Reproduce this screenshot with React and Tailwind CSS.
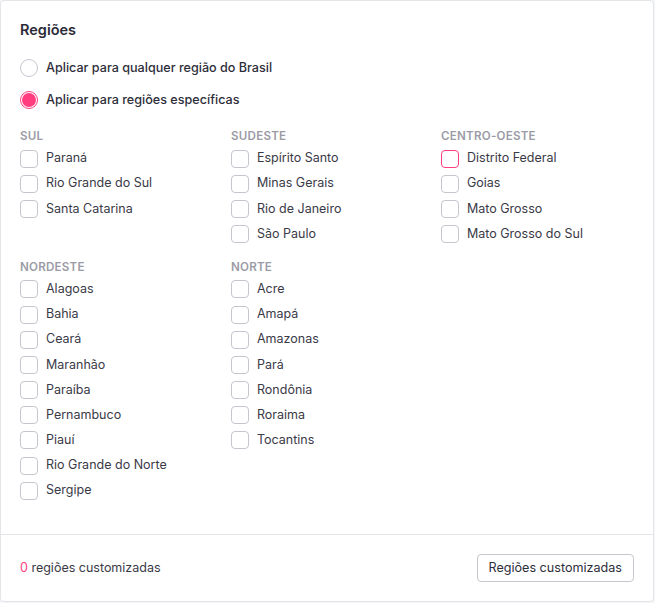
import React, { useState } from 'react';

const groups = [
  [
    { name: 'Sul', items: ['Paraná', 'Rio Grande do Sul', 'Santa Catarina'] },
    { name: 'Sudeste', items: ['Espírito Santo', 'Minas Gerais', 'Rio de Janeiro', 'São Paulo'] },
    { name: 'Centro-Oeste', items: ['Distrito Federal', 'Goias', 'Mato Grosso', 'Mato Grosso do Sul'] },
  ],
  [
    {
      name: 'Nordeste',
      items: ['Alagoas', 'Bahia', 'Ceará', 'Maranhão', 'Paraíba', 'Pernambuco', 'Piauí', 'Rio Grande do Norte', 'Sergipe'],
    },
    { name: 'Norte', items: ['Acre', 'Amapá', 'Amazonas', 'Pará', 'Rondônia', 'Roraima', 'Tocantins'] },
  ],
];

function Radio({ checked, label, onClick }) {
  return (
    <button onClick={onClick} className="flex h-[32px] items-center gap-[8px] text-left">
      {checked ? (
        <span className="flex h-[18px] w-[18px] items-center justify-center rounded-full border border-[#ff3d7f] bg-white">
          <span className="h-[14px] w-[14px] rounded-full bg-[#ff3d7f]" />
        </span>
      ) : (
        <span className="h-[18px] w-[18px] rounded-full border border-[#c6c6cf] bg-white" />
      )}
      <span className="text-[12.6px] font-medium text-[#2e2e3a]">{label}</span>
    </button>
  );
}

function Checkbox({ label, focused }) {
  return (
    <label className="flex h-[25.2px] items-center gap-[8px]">
      <span
        className={`h-[18px] w-[18px] rounded-[4px] border bg-white ${
          focused ? 'border-[#ff3d7f]' : 'border-[#c6c6cf]'
        }`}
      />
      <span className="text-[12.5px] text-[#3a3a47]">{label}</span>
    </label>
  );
}

export default function App() {
  const [mode, setMode] = useState('specific');

  return (
    <div className="min-h-screen bg-[#f4f5f7] font-['Inter',sans-serif]">
      <div className="flex h-[602px] w-[654px] flex-col rounded-[4px] border border-[#e3e5e9] bg-white">
        {/* Body */}
        <div className="flex-1 px-[19px] pt-[19px]">
          <h3 className="h-[20px] text-[14.5px] font-semibold leading-[20px] text-[#2b2b38]">Regiões</h3>

          <div className="mt-[12px]">
            <Radio
              checked={mode === 'all'}
              onClick={() => setMode('all')}
              label="Aplicar para qualquer região do Brasil"
            />
            <Radio
              checked={mode === 'specific'}
              onClick={() => setMode('specific')}
              label="Aplicar para regiões específicas"
            />
          </div>

          <div className="mt-[10px] flex flex-col gap-[10px]">
            {groups.map((row, i) => (
              <div key={i} className="grid grid-cols-[211px_210px_195px]">
                {row.map(group => (
                  <div key={group.name}>
                    <p className="h-[20px] text-[11.6px] font-semibold uppercase leading-[20px] tracking-[0.02em] text-[#9b9ba6]">
                      {group.name}
                    </p>
                    {group.items.map(item => (
                      <Checkbox key={item} label={item} focused={item === 'Distrito Federal'} />
                    ))}
                  </div>
                ))}
              </div>
            ))}
          </div>
        </div>

        {/* Footer */}
        <div className="flex h-[67px] items-center justify-between border-t border-[#e3e5e9] pl-[19px] pr-[19px]">
          <p className="text-[12.5px] text-[#3a3a47]">
            <span className="text-[#ff3d7f]">0</span> regiões customizadas
          </p>
          <button className="h-[28px] rounded-[4px] border border-[#c6c6cf] px-[11px] text-[12.6px] text-[#2e2e3a]">
            Regiões customizadas
          </button>
        </div>
      </div>
    </div>
  );
}
